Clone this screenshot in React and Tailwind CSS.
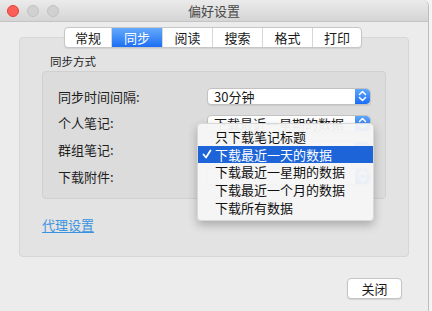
import React from 'react';

const tabs = [
  { label: '常规', w: 'w-[46px]' },
  { label: '同步', w: 'w-[51px]', active: true },
  { label: '阅读', w: 'w-[50px]' },
  { label: '搜索', w: 'w-[50px]' },
  { label: '格式', w: 'w-[50px]' },
  { label: '打印', w: 'w-[49px]' },
];

const menuItems = ['只下载笔记标题', '下载最近一天的数据', '下载最近一星期的数据', '下载最近一个月的数据', '下载所有数据'];

// little blue up/down stepper at the end of a popup button
const Stepper = () => (
  <div className="w-[15px] h-full rounded-r-[4px] bg-gradient-to-b from-[#5ea6fb] to-[#1a6cf4] flex items-center justify-center">
    <svg width="9" height="12" viewBox="0 0 9 12" fill="none" stroke="white" strokeWidth="1.5" strokeLinecap="round" strokeLinejoin="round">
      <path d="M1.5 4.5 L4.5 1.5 L7.5 4.5" />
      <path d="M1.5 7.5 L4.5 10.5 L7.5 7.5" />
    </svg>
  </div>
);

const Select = ({ value }) => (
  <div className="w-[164px] h-[17px] flex bg-white rounded-[4px] border border-[#c2c2c2] shadow-[0_1px_1px_rgba(0,0,0,0.08)] overflow-hidden">
    <div className="flex-1 pl-[6px] flex items-center text-[13px] leading-[15px] text-[#1a1a1a] whitespace-nowrap">{value}</div>
    <Stepper />
  </div>
);

const Row = ({ label, value }) => (
  <div className="h-[26.7px] flex items-center">
    <div className="w-[164px] pl-[15px] text-[13px] text-[#1e1e1e]">{label}</div>
    <Select value={value} />
  </div>
);

export default function App() {
  return (
    <div className="w-[432px] h-[311px] bg-[#f4f4f4] overflow-hidden font-['Noto_Sans_CJK_SC','Liberation_Sans',sans-serif]">
      <div className="w-[429px] h-full bg-[#ececec] border-r border-[#bdbdbd] rounded-tr-[6px] flex flex-col relative">
        {/* title bar */}
        <div className="h-[22px] shrink-0 rounded-tr-[6px] bg-gradient-to-b from-[#ebebeb] to-[#d5d5d5] border-b border-[#c4c4c4] flex items-center relative">
          <div className="flex gap-[8px] pl-[7px]">
            <div className="w-[12px] h-[12px] rounded-full bg-[#fc5f57] border border-[#e0443e]" />
            <div className="w-[12px] h-[12px] rounded-full bg-[#d1d1d1] border border-[#c1c1c1]" />
            <div className="w-[12px] h-[12px] rounded-full bg-[#d1d1d1] border border-[#c1c1c1]" />
          </div>
          <div className="absolute inset-0 flex items-center justify-center text-[13px] text-[#4a4a4a]">偏好设置</div>
        </div>

        {/* tabs */}
        <div className="mt-[5px] flex justify-center relative z-10">
          <div className="flex h-[21px] bg-white rounded-[4px] border border-[#c6c6c6] shadow-[0_1px_1px_rgba(0,0,0,0.08)] overflow-hidden ml-[-2px]">
            {tabs.map((t, i) => (
              <div
                key={t.label}
                className={`${t.w} flex items-center justify-center text-[13px] ${i > 0 ? 'border-l border-[#d6d6d6]' : ''} ${t.active ? 'bg-gradient-to-b from-[#64a9fb] to-[#1b6ef4] text-white' : 'text-[#1a1a1a]'}`}
              >
                {t.label}
              </div>
            ))}
          </div>
        </div>

        {/* outer group box */}
        <div className="ml-[19px] mt-[-11px] w-[390px] h-[220px] bg-[#e3e3e3] border border-[#d6d6d6] rounded-[4px] flex flex-col">
          <div className="pl-[30px] pt-[16px] text-[11.5px] leading-[14px] text-[#1e1e1e]">同步方式</div>
          <div className="ml-[22px] mt-[3px] w-[344px] h-[128px] bg-[#dcdcdc] border border-[#d0d0d0] rounded-[4px] pt-[11px]">
            <Row label="同步时间间隔:" value="30分钟" />
            <Row label="个人笔记:" value="下载最近一星期的数据" />
            <Row label="群组笔记:" value="" />
            <Row label="下载附件:" value="" />
          </div>
          <div className="ml-[22px] mt-[16px] text-[13px] text-[#3a93df] underline underline-offset-2">代理设置</div>
        </div>

        {/* bottom button */}
        <div className="flex justify-end pr-[26px] mt-[21px]">
          <div className="w-[55px] h-[21px] bg-white border border-[#c4c4c4] rounded-[4px] shadow-[0_1px_1px_rgba(0,0,0,0.1)] flex items-center justify-center text-[13px] text-[#1a1a1a]">关闭</div>
        </div>

        {/* open popup menu */}
        <div className="absolute left-[197px] top-[123px] w-[177px] py-[4px] bg-[#f6f6f6]/95 rounded-[4px] border border-[#d8d8d8] shadow-[0_4px_10px_rgba(0,0,0,0.25)] z-20">
          {menuItems.map((m, i) => {
            const sel = i === 1;
            return (
              <div key={m} className={`h-[17.6px] flex items-center text-[13px] leading-none ${sel ? 'bg-[#1c64d8] text-white' : 'text-[#111]'}`}>
                <div className="w-[17px] flex justify-center">
                  {sel && (
                    <svg width="10" height="10" viewBox="0 0 10 10" fill="none" stroke="white" strokeWidth="1.8" strokeLinecap="round" strokeLinejoin="round">
                      <path d="M1.5 5.5 L4 8.5 L8.5 1.5" />
                    </svg>
                  )}
                </div>
                <span>{m}</span>
              </div>
            );
          })}
        </div>
      </div>
    </div>
  );
}
